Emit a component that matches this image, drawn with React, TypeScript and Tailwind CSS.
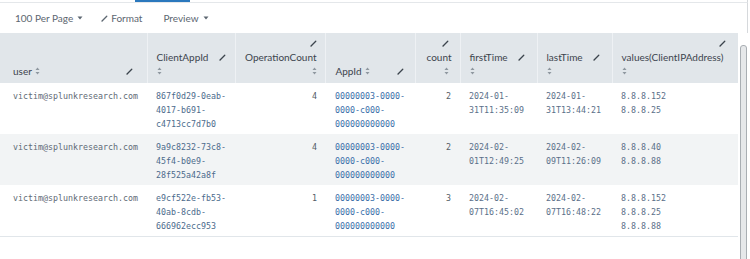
import React from "react";

type Row = {
  user: string;
  clientAppId: string[];
  opCount: string;
  appId: string[];
  count: string;
  firstTime: string[];
  lastTime: string[];
  ips: string[];
};

const rows: Row[] = [
  {
    user: "victim@splunkresearch.com",
    clientAppId: ["867f0d29-0eab-", "4017-b691-", "c4713cc7d7b0"],
    opCount: "4",
    appId: ["00000003-0000-", "0000-c000-", "000000000000"],
    count: "2",
    firstTime: ["2024-01-", "31T11:35:09"],
    lastTime: ["2024-01-", "31T13:44:21"],
    ips: ["8.8.8.152", "8.8.8.25"],
  },
  {
    user: "victim@splunkresearch.com",
    clientAppId: ["9a9c8232-73c8-", "45f4-b0e9-", "28f525a42a8f"],
    opCount: "4",
    appId: ["00000003-0000-", "0000-c000-", "000000000000"],
    count: "2",
    firstTime: ["2024-02-", "01T12:49:25"],
    lastTime: ["2024-02-", "09T11:26:09"],
    ips: ["8.8.8.40", "8.8.8.88"],
  },
  {
    user: "victim@splunkresearch.com",
    clientAppId: ["e9cf522e-fb53-", "40ab-8cdb-", "666962ecc953"],
    opCount: "1",
    appId: ["00000003-0000-", "0000-c000-", "000000000000"],
    count: "3",
    firstTime: ["2024-02-", "07T16:45:02"],
    lastTime: ["2024-02-", "07T16:48:22"],
    ips: ["8.8.8.152", "8.8.8.25", "8.8.8.88"],
  },
];

function Pencil({ className = "" }: { className?: string }) {
  return (
    <svg width="7" height="7" viewBox="0 0 8 8" className={className}>
      <path d="M1.2 6.8 L6.6 1.4" stroke="currentColor" strokeWidth="1.5" strokeLinecap="round" />
      <path d="M0.6 7.4 L1.6 5.8 L2.2 6.4 Z" fill="currentColor" />
    </svg>
  );
}

function Sort() {
  return (
    <svg width="5" height="8" viewBox="0 0 5 8" className="inline-block text-[#8e979f]">
      <path d="M2.5 0.5 L4.5 3 L0.5 3 Z" fill="currentColor" />
      <path d="M2.5 7.5 L4.5 5 L0.5 5 Z" fill="currentColor" />
    </svg>
  );
}

function Caret() {
  return (
    <svg width="6" height="4" viewBox="0 0 6 4" className="inline-block ml-[4px] mb-[1px]">
      <path d="M0.5 0.5 L5.5 0.5 L3 3.5 Z" fill="currentColor" />
    </svg>
  );
}

function Lines({ items, color }: { items: string[]; color: string }) {
  return (
    <div className={color}>
      {items.map((l, i) => (
        <div key={i}>{l}</div>
      ))}
    </div>
  );
}

const th = "h-[50px] align-bottom border-l border-[#eef1f4] first:border-l-0 pl-[9px] pr-[8px] pb-[5px] font-normal";
const td = "align-top pt-[6px] pb-[3px] pl-[9px] pr-[8px]";

export default function App() {
  return (
    <div className="w-[750px] h-[259px] overflow-hidden bg-white" style={{ fontFamily: "Lato, 'Liberation Sans', sans-serif" }}>
      {/* top tab strip */}
      <div className="h-[3px] border-b border-[#e4e7ea] w-[748px] border-r border-r-[#d6d9dc]">
        <div className="ml-[135px] w-[55px] h-[2px] bg-[#2a78bd]" />
      </div>

      {/* toolbar */}
      <div className="h-[30px] w-[748px] border-r border-[#d6d9dc] flex items-center gap-[19px] pl-[15px] text-[10px] text-[#5c6670]">
        <span className="flex items-center">
          100 Per Page
          <Caret />
        </span>
        <span className="flex items-center gap-[3px] -ml-[1px]">
          <Pencil className="text-[#5c6670]" />
          Format
        </span>
        <span className="flex items-center ml-[2px]">
          Preview
          <Caret />
        </span>
      </div>

      <div className="flex items-start">
        <table className="table-fixed w-[738px] border-collapse text-[10px] leading-[14px]">
          <colgroup>
            <col className="w-[147px]" />
            <col className="w-[88px]" />
            <col className="w-[90px]" />
            <col className="w-[90px]" />
            <col className="w-[45px]" />
            <col className="w-[77px]" />
            <col className="w-[75px]" />
            <col className="w-[126px]" />
          </colgroup>
          <thead className="bg-[#e1e6ea] text-[#3c444d]">
            <tr>
              <th className={`${th} pl-[13px] text-left`}>
                <div className="flex items-center justify-between pr-[6px]">
                  <span className="flex items-center gap-[3px]">
                    user <Sort />
                  </span>
                  <Pencil className="text-[#3c444d]" />
                </div>
              </th>
              <th className={`${th} text-left`}>
                <div className="flex items-center justify-between pr-[1px]">
                  <span>ClientAppId</span>
                  <Pencil className="text-[#3c444d]" />
                </div>
                <div className="flex items-center h-[14px]">
                  <Sort />
                </div>
              </th>
              <th className={`${th} text-right`}>
                <div className="flex justify-end items-center h-[14px]">
                  <Pencil className="text-[#3c444d]" />
                </div>
                <div>OperationCount</div>
                <div className="flex justify-end items-center h-[14px]">
                  <Sort />
                </div>
              </th>
              <th className={`${th} pl-[10px] text-left`}>
                <div className="flex items-center justify-between pr-[3px]">
                  <span className="flex items-center gap-[3px]">
                    AppId <Sort />
                  </span>
                  <Pencil className="text-[#3c444d]" />
                </div>
              </th>
              <th className={`${th} text-right`}>
                <div className="flex justify-end items-center h-[14px] pr-[3px]">
                  <Pencil className="text-[#3c444d]" />
                </div>
                <div>count</div>
                <div className="flex justify-end items-center h-[14px] pr-[3px]">
                  <Sort />
                </div>
              </th>
              <th className={`${th} text-left`}>
                <div className="flex items-center justify-between pr-[4px]">
                  <span>firstTime</span>
                  <Pencil className="text-[#3c444d]" />
                </div>
                <div className="flex items-center h-[14px]">
                  <Sort />
                </div>
              </th>
              <th className={`${th} pl-[8px] text-left`}>
                <div className="flex items-center justify-between pr-[4px]">
                  <span>lastTime</span>
                  <Pencil className="text-[#3c444d]" />
                </div>
                <div className="flex items-center h-[14px]">
                  <Sort />
                </div>
              </th>
              <th className={`${th} text-left`}>
                <div className="flex justify-end items-center h-[14px] pr-[4px]">
                  <Pencil className="text-[#3c444d]" />
                </div>
                <div className="whitespace-nowrap">values(ClientIPAddress)</div>
                <div className="flex items-center h-[14px]">
                  <Sort />
                </div>
              </th>
            </tr>
          </thead>
          <tbody
            className="text-[8.3px] leading-[14px]"
            style={{ fontFamily: "'DejaVu Sans Mono', 'Liberation Mono', monospace" }}
          >
            {rows.map((r, i) => (
              <tr
                key={i}
                className={`h-[51px] ${i % 2 === 1 ? "bg-[#f2f4f5]" : "bg-white"} ${i === rows.length - 1 ? "border-b border-[#e1e6ea]" : ""}`}
              >
                <td className={`${td} pl-[13px] text-[#5f6a75]`}>{r.user}</td>
                <td className={td}>
                  <Lines items={r.clientAppId} color="text-[#4d6b8c]" />
                </td>
                <td className={`${td} text-right text-[#555d66]`}>{r.opCount}</td>
                <td className={`${td} pl-[10px]`}>
                  <Lines items={r.appId} color="text-[#3a6ea8]" />
                </td>
                <td className={`${td} text-right text-[#555d66] pr-[9px]`}>{r.count}</td>
                <td className={td}>
                  <Lines items={r.firstTime} color="text-[#5b7089]" />
                </td>
                <td className={`${td} pl-[8px]`}>
                  <Lines items={r.lastTime} color="text-[#5b7089]" />
                </td>
                <td className={td}>
                  <Lines items={r.ips} color="text-[#5b7089]" />
                </td>
              </tr>
            ))}
          </tbody>
        </table>
        {/* scrollbar */}
        <div className="w-[12px] pl-[2px] pt-[12px]">
          <div className="w-[7px] h-[220px] rounded-t-[3px] border border-[#a9aeb3] bg-[#e6e8ea]" />
        </div>
      </div>
    </div>
  );
}
